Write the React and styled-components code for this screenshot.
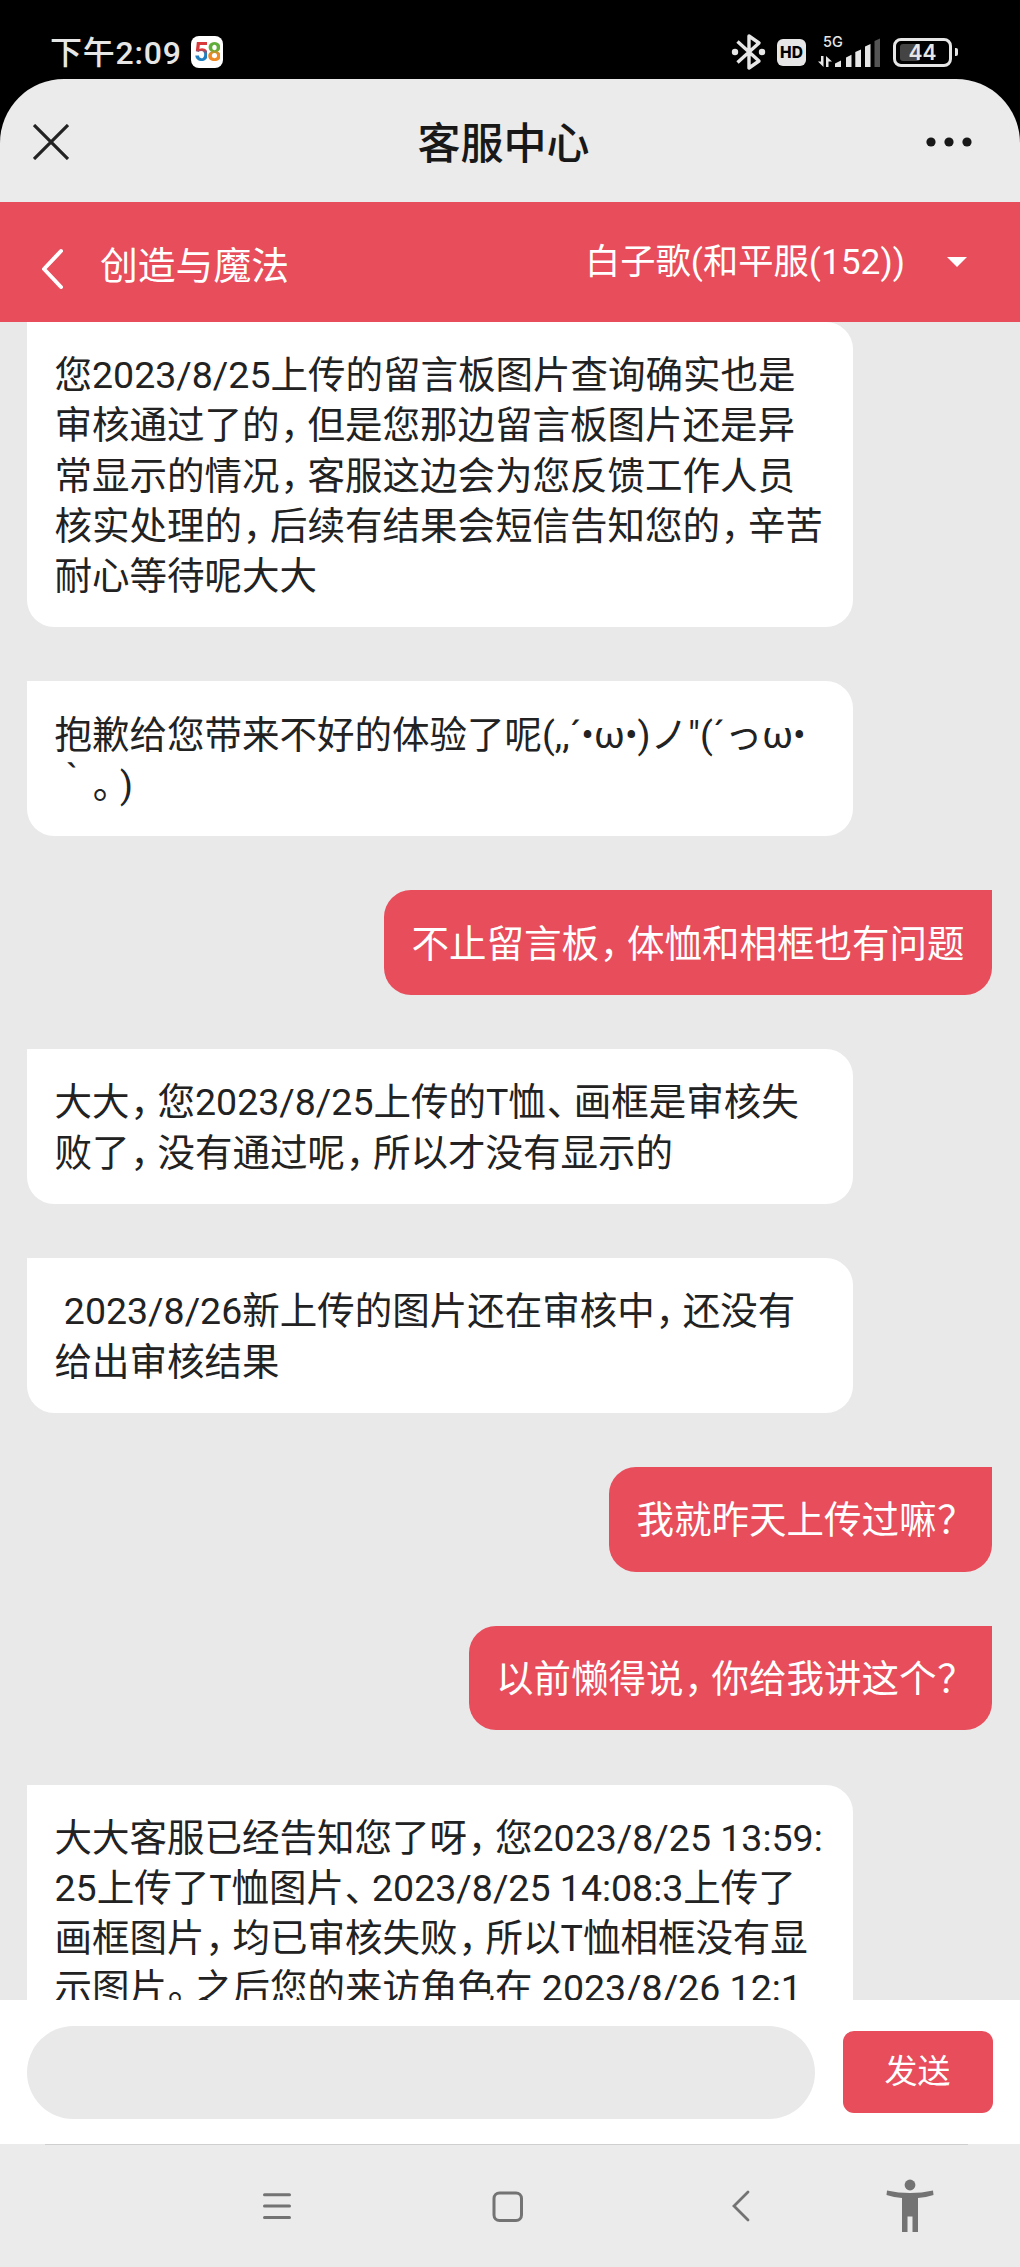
import styled, { createGlobalStyle, css } from 'styled-components';

const RED = '#e74d5b';

const messages = [
	{
		lines: [
			'您2023/8/25上传的留言板图片查询确实也是',
			'审核通过了的，但是您那边留言板图片还是异',
			'常显示的情况，客服这边会为您反馈工作人员',
			'核实处理的，后续有结果会短信告知您的，辛苦',
			'耐心等待呢大大',
		],
	},
	{ lines: ['抱歉给您带来不好的体验了呢(,,´•ω•)ノ"(´っω•', '｀。)'] },
	{ mine: true, lines: ['不止留言板，体恤和相框也有问题'] },
	{ lines: ['大大，您2023/8/25上传的T恤、画框是审核失', '败了，没有通过呢，所以才没有显示的'] },
	{ lines: [' 2023/8/26新上传的图片还在审核中，还没有', '给出审核结果'] },
	{ mine: true, lines: ['我就昨天上传过嘛？'] },
	{ mine: true, lines: ['以前懒得说，你给我讲这个？'] },
	{
		lines: [
			'大大客服已经告知您了呀，您2023/8/25 13:59:',
			'25上传了T恤图片、2023/8/25 14:08:3上传了',
			'画框图片，均已审核失败，所以T恤相框没有显',
			'示图片。之后您的来访角色在 2023/8/26 12:1',
		],
	},
];

// Full-width punctuation is set narrower than the characters around it
const Line = ({ text }) => (
	<TextLine>
		{text.split(/([，、。？])/).map((part, i) => (/^[，、。？]$/.test(part) ? <Mark key={i}>{part}</Mark> : part))}
	</TextLine>
);

const App = () => {
	return (
		<>
			<GlobalStyle />
			<Screen>
				<StatusBar>
					<StatusGroup>
						<Clock>下午2:09</Clock>
						<AppBadge>
							<Digit $from='#d8393b' $to='#1f7fc0'>
								5
							</Digit>
							<Digit $from='#5fae3a' $to='#ee8a26'>
								8
							</Digit>
						</AppBadge>
					</StatusGroup>
					<StatusIcons />
				</StatusBar>

				<Sheet>
					<TitleBar>
						<svg width='36' height='36' viewBox='0 0 36 36' fill='none' stroke='#222' strokeWidth='3.2'>
							<path d='M1 1L35 35M35 1L1 35' />
						</svg>
						<Title>客服中心</Title>
						<svg width='46' height='10' viewBox='0 0 46 10' fill='#181818'>
							<circle cx='5' cy='5' r='4.6' />
							<circle cx='23' cy='5' r='4.6' />
							<circle cx='41' cy='5' r='4.6' />
						</svg>
					</TitleBar>

					<GameBar>
						<svg width='24' height='42' viewBox='0 0 24 42' fill='none' stroke='#fff' strokeWidth='4' strokeLinecap='round' strokeLinejoin='round'>
							<path d='M21 3L4 21L21 39' />
						</svg>
						<GameName>创造与魔法</GameName>
						<RoleName>白子歌(和平服(152))</RoleName>
						<Caret />
					</GameBar>

					<Chat>
						{messages.map(({ mine, lines }, i) => (
							<Bubble key={i} $mine={mine}>
								{lines.map((line) => (
									<Line key={line} text={line} />
								))}
							</Bubble>
						))}
					</Chat>

					<Composer>
						<Input />
						<Send>发送</Send>
					</Composer>
				</Sheet>

				<NavBar>
					<Divider />
					<NavIcons />
				</NavBar>
			</Screen>
		</>
	);
};

const StatusIcons = () => (
	<StatusGroup>
		<svg width='36' height='38' viewBox='0 0 36 38' fill='none' stroke='#e6e6e6' strokeWidth='3.4'>
			<path d='M6.500 8.500L28 28L18 35V3L28 10L6.500 29.500' strokeLinejoin='round' />
			<circle cx='4' cy='19' r='3.200' fill='#e6e6e6' stroke='none' />
			<circle cx='31' cy='19' r='3.200' fill='#e6e6e6' stroke='none' />
		</svg>
		<HdBadge>HD</HdBadge>
		<Signal>
			<Network>5G</Network>
			<svg width='62' height='29' viewBox='0 0 62 29' fill='#e6e6e6'>
				<path d='M3 18H5.500V29L0 23.500H3zM8 29V18L14 23.500H10.500V29z' />
				<path d='M17 29V25.500L23 22.500V29zM28 29V19.500L33.500 16.800V29zM37.300 29V14L43 11.500V29zM47 29V8.500L52.500 6V29z' />
				<path d='M56.500 29V3L62 .5V29z' fill='#555' />
			</svg>
		</Signal>
		<Battery>
			<Level />
			<span>44</span>
		</Battery>
		<BatteryTip />
	</StatusGroup>
);

const NavIcons = () => (
	<NavRow>
		<svg width='28' height='28' viewBox='0 0 28 28' fill='none' stroke='#737373' strokeWidth='3' strokeLinecap='round'>
			<path d='M1.500 2.700H26.500M1.500 14H26.500M1.500 25.400H26.500' />
		</svg>
		<HomeIcon viewBox='0 0 31 31' fill='none' stroke='#737373' strokeWidth='3'>
			<rect x='2' y='2' width='27.500' height='27.500' rx='5.500' />
		</HomeIcon>
		<BackIcon viewBox='0 0 18 32' fill='none' stroke='#737373' strokeWidth='2.800' strokeLinecap='round'>
			<path d='M16 2L2 16L16 30' />
		</BackIcon>
		<svg width='48' height='54' viewBox='0 0 48 54' fill='#737373'>
			<circle cx='24' cy='6' r='5.400' />
			<path d='M1 11.500Q24 16.500 47 11.500L47.500 16Q40 18.500 32 19V53H26.500V37.500H21.500V53H16V19Q8 18.500 .5 16z' />
		</svg>
	</NavRow>
);

const GlobalStyle = createGlobalStyle`
	body {
		margin: 0;
		background: #000;
		font-family: Roboto, 'Noto Sans CJK SC', sans-serif;
	}
	svg {
		display: block;
		flex: none;
	}
`;

const Screen = styled.div`
	display: flex;
	flex-direction: column;
	width: 1020px;
	height: 2267px;
	overflow: hidden;
	background: #000;
`;

const StatusBar = styled.header`
	display: flex;
	justify-content: space-between;
	box-sizing: border-box;
	height: 79px;
	padding: 32px 62px 7px 50px;
	color: #e6e6e6;
`;

const StatusGroup = styled.div`
	display: flex;
	align-items: center;
`;

const Clock = styled.span`
	width: 141px;
	padding-top: 2px;
	font-size: 32px;
	font-weight: 500;
	line-height: 40px;
	letter-spacing: 0.8px;
	white-space: nowrap;
`;

const AppBadge = styled.div`
	display: flex;
	align-items: center;
	justify-content: center;
	width: 32px;
	height: 32px;
	border-radius: 8px;
	background: #fff;
`;

const Digit = styled.span`
	font-family: Roboto, sans-serif;
	font-size: 26px;
	font-weight: 700;
	line-height: 30px;
	letter-spacing: -2px;
	color: transparent;
	background: linear-gradient(${(props) => props.$from} 42%, ${(props) => props.$to} 56%);
	background-clip: text;
`;

const HdBadge = styled.span`
	width: 29px;
	height: 27px;
	margin: 0 12px 0 10px;
	border-radius: 6px;
	background: #e6e6e6;
	color: #000;
	font: 800 15.5px/28px Inter, sans-serif;
	text-align: center;
`;

const Signal = styled.div`
	position: relative;
	width: 62px;
	margin-right: 13px;
`;

const Network = styled.span`
	position: absolute;
	top: -3px;
	left: 5px;
	font: 500 14.5px/14px Inter, sans-serif;
`;

const Battery = styled.div`
	position: relative;
	box-sizing: border-box;
	width: 59px;
	height: 29px;
	border: 3px solid #e6e6e6;
	border-radius: 8px;
	font: 600 21px/24px Inter, sans-serif;
	text-align: center;
	span {
		position: relative;
	}
`;

const Level = styled.i`
	position: absolute;
	top: 3px;
	left: 4px;
	width: 20px;
	height: 17px;
	border-radius: 3px;
	background: #444;
`;

const BatteryTip = styled.i`
	width: 3px;
	height: 8px;
	margin-left: 3px;
	border-radius: 0 2px 2px 0;
	background: #e6e6e6;
`;

const Sheet = styled.main`
	display: flex;
	flex-direction: column;
	height: 2065px;
	border-radius: 64px 64px 0 0;
	overflow: hidden;
	background: #ebebeb;
`;

const TitleBar = styled.div`
	display: flex;
	align-items: center;
	justify-content: space-between;
	flex: none;
	box-sizing: border-box;
	height: 123px;
	padding: 2px 48px 0 33px;
`;

const Title = styled.h1`
	margin: 0;
	padding: 4px 0 0 12px;
	color: #181818;
	font-size: 43px;
	font-weight: 500;
	line-height: 60px;
`;

const GameBar = styled.div`
	display: flex;
	align-items: center;
	flex: none;
	box-sizing: border-box;
	height: 120px;
	padding: 0 53px 0 40px;
	background: ${RED};
	color: #fff;
	svg {
		margin-top: 14px;
	}
`;

const GameName = styled.span`
	flex: 1;
	margin: 8px 0 0 36px;
	font-size: 37.8px;
	line-height: 56px;
`;

const RoleName = styled.span`
	margin-right: 42px;
	font-size: 35.3px;
	line-height: 56px;
	white-space: nowrap;
`;

const Caret = styled.i`
	border: 10.5px solid transparent;
	border-top-color: #fff;
	border-bottom: 0;
`;

const Chat = styled.section`
	display: flex;
	flex-direction: column;
	align-items: flex-start;
	gap: 54.4px;
	height: 1678px;
	flex: none;
	overflow: hidden;
	background: #e9e9e9;
	padding: 0 28px 0 27px;
	box-sizing: border-box;
`;

const Bubble = styled.div`
	flex: none;
	box-sizing: border-box;
	width: 826px;
	padding: 28.4px 27.5px 26px;
	border-radius: 0 27px 27px 27px;
	background: #fff;
	color: #222;
	font-size: 37.5px;
	line-height: 50.1px;
	${(props) =>
		props.$mine &&
		css`
			align-self: flex-end;
			width: auto;
			border-radius: 27px 0 27px 27px;
			background: ${RED};
			color: #fff;
		`}
`;

const TextLine = styled.div`
	height: 50.1px;
	white-space: pre;
	text-spacing-trim: space-all;
`;

const Mark = styled.span`
	padding-left: 0.8px;
	letter-spacing: -10.3px;
`;

const Composer = styled.form`
	display: flex;
	align-items: center;
	justify-content: space-between;
	flex: none;
	box-sizing: border-box;
	height: 144px;
	padding: 0 27.5px 0 27px;
	background: #fff;
`;

const Input = styled.div`
	width: 788px;
	height: 93px;
	border-radius: 47px;
	background: #e9e9e9;
`;

const Send = styled.button`
	width: 150px;
	height: 82px;
	padding: 0;
	border: 0;
	border-radius: 11px;
	background: ${RED};
	color: #fff;
	font: 33px/48px Roboto, 'Noto Sans CJK SC', sans-serif;
`;

const NavBar = styled.footer`
	flex: none;
	height: 123px;
	background: #ebebeb;
`;

const Divider = styled.div`
	height: 1px;
	margin: 0 52px 0 45px;
	background: #cfcfcf;
`;

const NavRow = styled.nav`
	display: flex;
	align-items: center;
	height: 122px;
	padding-left: 263px;
`;

const HomeIcon = styled.svg`
	width: 31px;
	height: 31px;
	margin: 0 209px 0 201px;
`;

const BackIcon = styled.svg`
	width: 18px;
	height: 32px;
	margin-right: 136px;
`;

export default App;
